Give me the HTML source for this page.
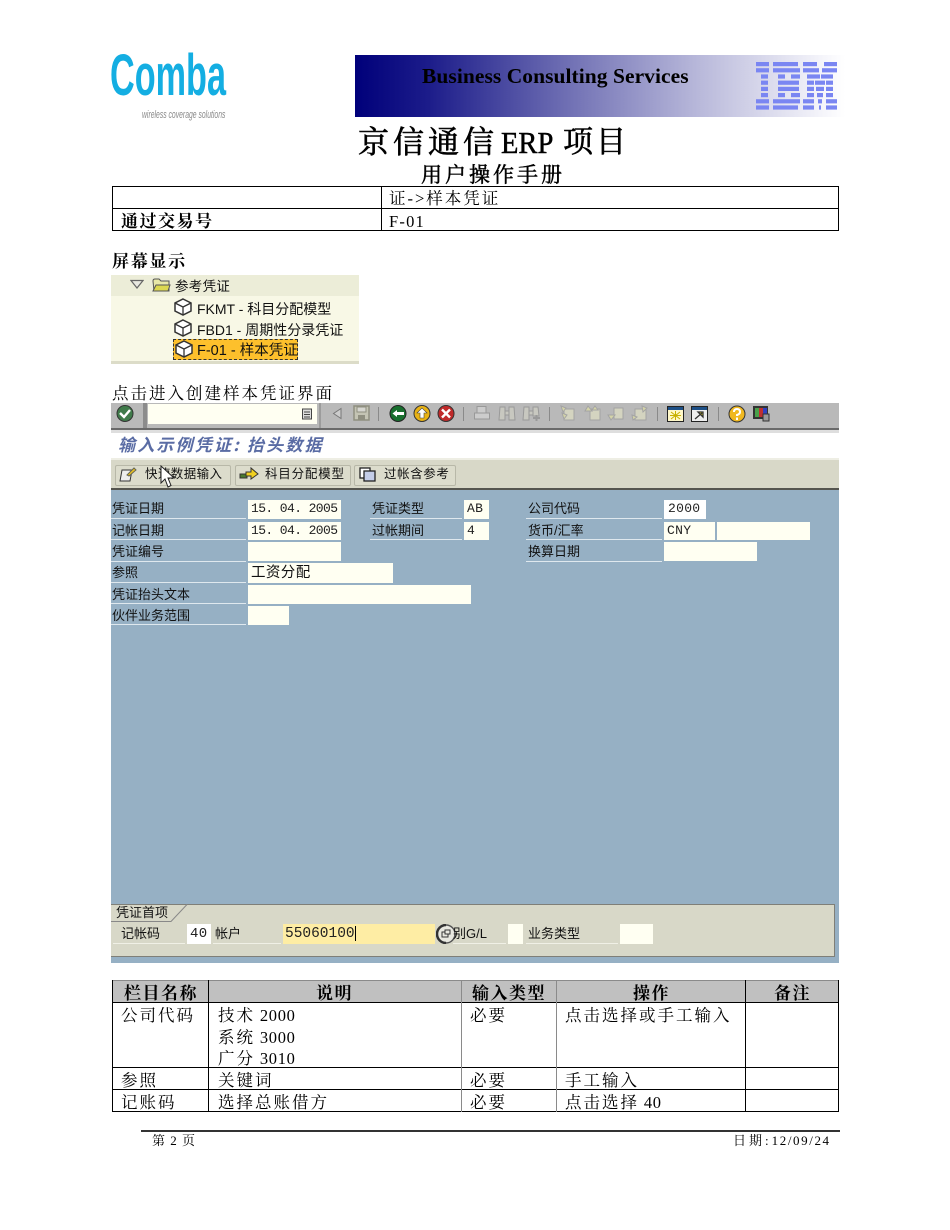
<!DOCTYPE html>
<html><head><meta charset="utf-8"><style>
html,body{margin:0;padding:0;background:#fff}
#p{position:relative;width:950px;height:1230px;overflow:hidden;background:#fff;font-family:"Liberation Serif","Noto Serif CJK SC",serif;color:#000;filter:blur(.3px)}
#p div,#p svg{position:absolute}
.t{white-space:nowrap;line-height:20px;height:20px}
.s{font-size:16.500px;letter-spacing:2px}
.s span{letter-spacing:.7px}
.h{font-size:17px;font-weight:700;letter-spacing:1.500px}
.l{font-family:"Liberation Sans","Noto Sans CJK SC",sans-serif;font-size:13px;color:#111;white-space:nowrap;line-height:16px;height:16px}
.u{background:#dfe8ee;height:1px}
.i{background:#fffff2}
.m{font-family:"Liberation Mono","Noto Sans CJK SC",monospace;font-size:13px;color:#222;white-space:nowrap;line-height:16px;height:16px;letter-spacing:.3px}
.b{background:#000}
.g{background:#8a8a8a}
</style></head><body><div id="p">

<!-- logo -->
<div class="t" style="left:110px;top:48px;height:56px;font:700 58px/56px 'Liberation Sans',sans-serif;color:#14aee2;transform:scaleX(.59);transform-origin:0 0;letter-spacing:0">Comba</div>
<div class="t" style="left:142px;top:105px;font:italic 11px/20px 'Liberation Sans',sans-serif;color:#8a8a8a;transform:scaleX(.62);transform-origin:0 0">wireless coverage solutions</div>

<!-- banner -->
<div style="left:355px;top:55px;width:490px;height:62px;background:linear-gradient(90deg,#00007a 0%,#1c1c8a 15%,#7474b6 45%,#b8b8da 70%,#f4f4fa 95%,#fff 100%)"></div>
<div class="t" style="left:422px;top:66px;font:700 21.500px/20px 'Liberation Serif',serif;color:#000;letter-spacing:.05px">Business Consulting Services</div>
<svg style="left:756px;top:62px" width="81" height="50" viewBox="0 0 81 50">
<g fill="#7a86f2">
<!-- I -->
<rect x="0" y="0" width="13" height="4.200"/><rect x="0" y="6.200" width="13" height="4.200"/>
<rect x="5" y="12.400" width="7" height="4.200"/><rect x="5" y="18.600" width="7" height="4.200"/><rect x="5" y="24.800" width="7" height="4.200"/><rect x="5" y="31" width="7" height="4.200"/>
<rect x="0" y="37.200" width="13" height="4.200"/><rect x="0" y="43.400" width="13" height="4.200"/>
<!-- B -->
<rect x="17" y="0" width="25" height="4.200"/><rect x="17" y="6.200" width="27" height="4.200"/>
<rect x="22" y="12.400" width="7" height="4.200"/><rect x="35" y="12.400" width="9" height="4.200"/>
<rect x="22" y="18.600" width="21" height="4.200"/><rect x="22" y="24.800" width="21" height="4.200"/>
<rect x="22" y="31" width="7" height="4.200"/><rect x="35" y="31" width="9" height="4.200"/>
<rect x="17" y="37.200" width="27" height="4.200"/><rect x="17" y="43.400" width="25" height="4.200"/>
<!-- M -->
<rect x="47" y="0" width="14" height="4.200"/><rect x="68" y="0" width="13" height="4.200"/>
<rect x="47" y="6.200" width="16" height="4.200"/><rect x="66" y="6.200" width="15" height="4.200"/>
<rect x="51" y="12.400" width="13" height="4.200"/><rect x="65" y="12.400" width="12" height="4.200"/>
<rect x="51" y="18.600" width="7" height="4.200"/><rect x="59" y="18.600" width="10" height="4.200"/><rect x="70" y="18.600" width="7" height="4.200"/>
<rect x="51" y="24.800" width="7" height="4.200"/><rect x="60" y="24.800" width="8" height="4.200"/><rect x="70" y="24.800" width="7" height="4.200"/>
<rect x="51" y="31" width="7" height="4.200"/><rect x="61" y="31" width="6" height="4.200"/><rect x="70" y="31" width="7" height="4.200"/>
<rect x="47" y="37.200" width="11" height="4.200"/><rect x="62" y="37.200" width="4" height="4.200"/><rect x="70" y="37.200" width="11" height="4.200"/>
<rect x="47" y="43.400" width="11" height="4.200"/><rect x="63" y="43.400" width="2" height="4.200"/><rect x="70" y="43.400" width="11" height="4.200"/>
</g></svg>

<!-- titles -->
<div class="t" style="left:358px;top:133px;font-size:31px;letter-spacing:4px;-webkit-text-stroke:.6px #000">京信通信</div>
<div class="t" style="left:501px;top:133px;font-size:31px;transform:scaleX(.92);transform-origin:0 0;-webkit-text-stroke:.5px #000">ERP</div>
<div class="t" style="left:563px;top:133px;font-size:30px;letter-spacing:3px;-webkit-text-stroke:.6px #000">项目</div>
<div class="t" style="left:421px;top:165px;font-size:21px;letter-spacing:3px;-webkit-text-stroke:.5px #000">用户操作手册</div>

<!-- table 1 -->
<div class="b" style="left:112px;top:186px;width:727px;height:1px"></div>
<div class="b" style="left:112px;top:208px;width:727px;height:1px"></div>
<div class="b" style="left:112px;top:230px;width:727px;height:1px"></div>
<div class="b" style="left:112px;top:186px;width:1px;height:45px"></div>
<div class="b" style="left:381px;top:186px;width:1px;height:45px"></div>
<div class="b" style="left:838px;top:186px;width:1px;height:45px"></div>
<div class="t s" style="left:389px;top:189px">证-&gt;样本凭证</div>
<div class="t h" style="left:121px;top:212px">通过交易号</div>
<div class="t s" style="left:389px;top:212px;letter-spacing:1.200px">F-01</div>

<div class="t h" style="left:112px;top:252px;letter-spacing:1.700px">屏幕显示</div>

<!-- tree -->
<div style="left:111px;top:275px;width:248px;height:89px;background:#f8f8e6"></div>
<div style="left:111px;top:275px;width:248px;height:21px;background:#ecedd8"></div>
<div style="left:111px;top:361px;width:248px;height:3px;background:#dcdcc8"></div>
<svg style="left:130px;top:279px" width="14" height="11" viewBox="0 0 14 11"><path d="M1 1.5H13L7 9Z" fill="#e8e8e0" stroke="#666" stroke-width="1.2"/></svg>
<svg style="left:152px;top:278px" width="19" height="15" viewBox="0 0 19 15"><path d="M1 3Q1 1 3 1H7L9 3H17V13H2Z" fill="#e8e8a8" stroke="#555"/><path d="M1 13L4 7H18L16 13Z" fill="#dcd850" stroke="#555"/></svg>
<div class="l" style="left:175px;top:279px;font-size:13.500px;letter-spacing:.3px">参考凭证</div>
<svg width="0" height="0"><defs><g id="cube"><path d="M9 1L17 5V13L9 17L1 13V5Z" fill="#fff" stroke="#333" stroke-width="1.5"/><path d="M1 5L9 9L17 5M9 9V17" fill="none" stroke="#333" stroke-width="1.3"/></g></defs></svg>
<svg style="left:174px;top:298px" width="18" height="18"><use href="#cube"/></svg>
<div class="l" style="left:197px;top:301px;font-size:14px">FKMT - 科目分配模型</div>
<svg style="left:174px;top:319px" width="18" height="18"><use href="#cube"/></svg>
<div class="l" style="left:197px;top:322px;font-size:14px">FBD1 - 周期性分录凭证</div>
<div style="left:173px;top:339px;width:125px;height:21px;background:#fdc02c;border:1px dashed #333;box-sizing:border-box"></div>
<svg style="left:175px;top:340px" width="18" height="18"><use href="#cube"/></svg>
<div class="l" style="left:197px;top:343px;font-size:14.500px">F-01 - 样本凭证</div>

<div class="t s" style="left:112px;top:384px;">点击进入创建样本凭证界面</div>

<!-- SAP -->
<div style="left:111px;top:403px;width:728px;height:560px;background:#96b0c4"></div>
<div style="left:111px;top:403px;width:728px;height:25px;background:#b9b9b9"></div>
<div style="left:111px;top:428px;width:728px;height:2px;background:#6a6a6a"></div>
<div style="left:111px;top:430px;width:728px;height:3px;background:#dedede"></div>
<div style="left:111px;top:433px;width:728px;height:26px;background:#fff"></div>
<div style="left:111px;top:458px;width:728px;height:2px;background:#eeeee4"></div>
<div style="left:111px;top:460px;width:728px;height:28px;background:#d8d8c8"></div>
<div style="left:111px;top:488px;width:728px;height:2px;background:#55554f"></div>

<!-- toolbar -->
<svg style="left:116px;top:405px" width="18" height="17" viewBox="0 0 18 17"><circle cx="9" cy="8.5" r="8" fill="#3f7a4a" stroke="#333"/><path d="M4 8L8 12L14 5" fill="none" stroke="#fff" stroke-width="2.4"/></svg>
<div style="left:143px;top:403px;width:4px;height:25px;background:#8c8c8c"></div>
<div style="left:148px;top:404px;width:169px;height:20px;background:#fffff2"></div>
<div style="left:319px;top:403px;width:2px;height:25px;background:#9c9c9c"></div>
<svg style="left:301px;top:407px" width="12" height="13"><rect x="1.5" y="2" width="9" height="10" fill="#ddd" stroke="#444"/><path d="M3 5H9M3 7.5H9M3 10H9" stroke="#444"/></svg>
<svg style="left:331px;top:407px" width="12" height="13"><path d="M10 1.5L2.5 6.5L10 11.5Z" fill="#ccc" stroke="#777"/></svg>
<svg style="left:353px;top:405px" width="17" height="16"><rect x="1" y="1" width="15" height="14" fill="#c4c4b4" stroke="#8f8f80" stroke-width="1.5"/><rect x="4" y="2" width="9" height="5" fill="#d6d6d0" stroke="#8f8f80"/><rect x="5" y="10" width="7" height="5" fill="#8f8f80"/></svg>
<div style="left:378px;top:407px;width:1px;height:14px;background:#8a8a8a"></div>
<svg style="left:389px;top:405px" width="18" height="17" viewBox="0 0 18 17"><circle cx="9" cy="8.5" r="8" fill="#186f2e" stroke="#222"/><path d="M3.500 8.500L8 5V7H15V10H8V12Z" fill="#fff"/></svg>
<svg style="left:413px;top:405px" width="18" height="17" viewBox="0 0 18 17"><circle cx="9" cy="8.5" r="8" fill="#e8b214" stroke="#333"/><path d="M9 3L4 8H7V13H11V8H14Z" fill="#fff" stroke="#444" stroke-width=".6"/></svg>
<svg style="left:437px;top:405px" width="18" height="17" viewBox="0 0 18 17"><circle cx="9" cy="8.5" r="8" fill="#c02a2a" stroke="#333"/><path d="M5 4.500L13 12.500M13 4.500L5 12.500" stroke="#fff" stroke-width="2.400"/></svg>
<div style="left:463px;top:407px;width:1px;height:14px;background:#8a8a8a"></div>
<svg style="left:473px;top:405px" width="18" height="17"><path d="M4 1.500H13V8H4Z" fill="#ccc" stroke="#999"/><rect x="1.500" y="8" width="15" height="6" fill="#ccc" stroke="#999"/></svg>
<svg style="left:497px;top:405px" width="20" height="17"><path d="M3 2H8V15H2ZM12 2H17L18 15H12ZM8 6H12V10H8Z" fill="#c8c8c0" stroke="#999"/></svg>
<svg style="left:521px;top:405px" width="20" height="17"><path d="M3 2H8V15H2ZM12 2H17L18 11H12ZM8 6H12V10H8Z" fill="#c8c8c0" stroke="#999"/><path d="M12 13H19M15.500 10V16" stroke="#999" stroke-width="2"/></svg>
<div style="left:549px;top:407px;width:1px;height:14px;background:#8a8a8a"></div>
<svg style="left:559px;top:405px" width="18" height="17"><path d="M5 4H15V15H5Z" fill="#d4d4c0" stroke="#a4a4a4"/><path d="M2 1L7 3L4 7ZM3 8L8 10L5 14Z" fill="#d4d4a8" stroke="#a4a4a4"/></svg>
<svg style="left:584px;top:405px" width="18" height="17"><path d="M6 4H16V15H6Z" fill="#d4d4c0" stroke="#a4a4a4"/><path d="M4 1L8 6H1ZM11 1L14 5H8Z" fill="#d4d4a8" stroke="#a4a4a4"/></svg>
<svg style="left:607px;top:405px" width="18" height="17"><path d="M7 3H16V14H7Z" fill="#d4d4c0" stroke="#a4a4a4"/><path d="M4 15L8 10H1Z" fill="#d4d4a8" stroke="#a4a4a4"/></svg>
<svg style="left:630px;top:405px" width="18" height="17"><path d="M5 4H16V15H5Z" fill="#d4d4c0" stroke="#a4a4a4"/><path d="M12 1L17 3L13 7ZM2 10L7 12L3 15Z" fill="#d4d4a8" stroke="#a4a4a4"/></svg>
<div style="left:657px;top:407px;width:1px;height:14px;background:#8a8a8a"></div>
<svg style="left:667px;top:406px" width="17" height="16"><rect x=".5" y=".5" width="16" height="15" fill="#fff8c8" stroke="#222"/><rect x="1" y="1" width="15" height="3" fill="#1d4f86"/><path d="M8.500 5V14M4 6L13 13M13 6L4 13M3 9.500H14" stroke="#c8b000"/></svg>
<svg style="left:691px;top:406px" width="17" height="16"><rect x=".5" y=".5" width="16" height="15" fill="#eee" stroke="#222"/><rect x="1" y="1" width="15" height="3" fill="#1d4f86"/><path d="M4 13L11 7M7 6H12V11Z" stroke="#333" fill="#f0e020" stroke-width="1.300"/></svg>
<div style="left:718px;top:407px;width:1px;height:14px;background:#8a8a8a"></div>
<svg style="left:728px;top:405px" width="18" height="18" viewBox="0 0 18 18"><circle cx="9" cy="9" r="8" fill="#f0b820" stroke="#333"/><path d="M6 7Q6 4 9 4Q12 4 12 7Q12 9 9 10V11" fill="none" stroke="#fff" stroke-width="2"/><rect x="8" y="12.500" width="2" height="2.500" fill="#fff"/></svg>
<svg style="left:752px;top:405px" width="18" height="18"><rect x="1" y="1" width="15" height="13" fill="#333"/><rect x="3" y="3" width="4" height="9" fill="#4aa04a"/><rect x="7" y="3" width="4" height="9" fill="#c03030"/><rect x="11" y="3" width="4" height="9" fill="#3040c0"/><rect x="11" y="9" width="6" height="7" fill="#999" stroke="#333"/></svg>

<!-- screen title -->
<div class="t" style="left:118px;top:434px;font:italic 700 17px/20px 'Noto Sans CJK SC',sans-serif;color:#5a6ca4;letter-spacing:2.200px">输入示例凭证: 抬头数据</div>

<!-- buttons -->
<div style="left:115px;top:465px;width:114px;height:19px;border:1px solid #b8b8a8;background:#dcdccc;border-radius:2px"></div>
<div style="left:235px;top:465px;width:114px;height:19px;border:1px solid #b8b8a8;background:#dcdccc;border-radius:2px"></div>
<div style="left:354px;top:465px;width:100px;height:19px;border:1px solid #b8b8a8;background:#dcdccc;border-radius:2px"></div>
<svg style="left:119px;top:466px" width="18" height="17"><path d="M3 4H13L11 15H1Z" fill="#eee" stroke="#333"/><path d="M8 9L15 2L17 4L10 10Z" fill="#e8c020" stroke="#665"/></svg>
<div class="l" style="left:145px;top:466px;font-size:12.500px;letter-spacing:.4px">快速数据输入</div>
<svg style="left:239px;top:466px" width="20" height="17"><path d="M1 8H8V12H1Z" fill="#487a30" stroke="#333"/><path d="M7 6H12V2L19 8L12 13V10H7Z" fill="#f0d020" stroke="#333"/></svg>
<div class="l" style="left:265px;top:466px;font-size:12.500px;letter-spacing:.8px">科目分配模型</div>
<svg style="left:359px;top:467px" width="17" height="15"><rect x="1" y="1" width="10" height="10" fill="#fff" stroke="#222" stroke-width="1.300"/><rect x="5" y="4" width="11" height="10" fill="#c4cde8" stroke="#222" stroke-width="1.300"/></svg>
<div class="l" style="left:384px;top:466px;font-size:12.500px;letter-spacing:.6px">过帐含参考</div>
<svg style="left:160px;top:465px" width="16" height="24" viewBox="0 0 16 24"><path d="M1 1V18L5 14L8 22L11 20.500L8 13H14Z" fill="#fff" stroke="#222"/></svg>

<!-- form labels -->
<div class="l" style="left:112px;top:501px">凭证日期</div><div class="u" style="left:111px;top:518px;width:135px"></div>
<div class="l" style="left:112px;top:523px">记帐日期</div><div class="u" style="left:111px;top:539px;width:135px"></div>
<div class="l" style="left:112px;top:544px">凭证编号</div><div class="u" style="left:111px;top:561px;width:135px"></div>
<div class="l" style="left:112px;top:565px">参照</div><div class="u" style="left:111px;top:582px;width:135px"></div>
<div class="l" style="left:112px;top:587px">凭证抬头文本</div><div class="u" style="left:111px;top:603px;width:135px"></div>
<div class="l" style="left:112px;top:608px">伙伴业务范围</div><div class="u" style="left:111px;top:624px;width:135px"></div>

<div class="i" style="left:248px;top:500px;width:93px;height:19px"></div>
<div class="i" style="left:248px;top:522px;width:93px;height:18px"></div>
<div class="i" style="left:248px;top:542px;width:93px;height:19px"></div>
<div class="i" style="left:248px;top:563px;width:145px;height:20px"></div>
<div class="i" style="left:248px;top:585px;width:223px;height:19px"></div>
<div class="i" style="left:248px;top:606px;width:41px;height:19px"></div>
<div class="m" style="left:251px;top:501px;letter-spacing:-.6px">15. 04. 2005</div>
<div class="m" style="left:251px;top:523px;letter-spacing:-.6px">15. 04. 2005</div>
<div class="l" style="left:251px;top:565px;font-size:14.500px;letter-spacing:.4px">工资分配</div>

<div class="l" style="left:372px;top:501px">凭证类型</div><div class="u" style="left:370px;top:518px;width:92px"></div>
<div class="l" style="left:372px;top:523px">过帐期间</div><div class="u" style="left:370px;top:539px;width:92px"></div>
<div class="i" style="left:464px;top:500px;width:25px;height:19px"></div>
<div class="i" style="left:464px;top:522px;width:25px;height:18px"></div>
<div class="m" style="left:467px;top:501px">AB</div>
<div class="m" style="left:467px;top:523px">4</div>

<div class="l" style="left:528px;top:501px">公司代码</div><div class="u" style="left:526px;top:518px;width:136px"></div>
<div class="l" style="left:528px;top:523px">货币/汇率</div><div class="u" style="left:526px;top:539px;width:136px"></div>
<div class="l" style="left:528px;top:544px">换算日期</div><div class="u" style="left:526px;top:561px;width:136px"></div>
<div class="i" style="left:664px;top:500px;width:42px;height:19px;background:#fff"></div>
<div class="i" style="left:664px;top:522px;width:51px;height:18px"></div>
<div class="i" style="left:717px;top:522px;width:93px;height:18px"></div>
<div class="i" style="left:664px;top:542px;width:93px;height:19px"></div>
<div class="m" style="left:668px;top:501px">2000</div>
<div class="m" style="left:667px;top:523px">CNY</div>

<!-- lower panel -->
<div style="left:111px;top:904px;width:724px;height:53px;background:#d8d8c8;border:1px solid #7f7f78;border-left:0;box-sizing:border-box"></div>
<svg style="left:111px;top:904px" width="78" height="18"><path d="M0 17.500H60L76 .5" fill="none" stroke="#888"/></svg>
<div class="l" style="left:116px;top:905px">凭证首项</div>
<div class="l" style="left:121px;top:926px">记帐码</div><div class="u" style="left:113px;top:943px;width:72px;background:#f0f0e6"></div>
<div style="left:187px;top:924px;width:24px;height:20px;background:#fff"></div>
<div class="m" style="left:190px;top:926px;font-size:14px">40</div>
<div class="l" style="left:215px;top:926px">帐户</div><div class="u" style="left:213px;top:943px;width:68px;background:#f0f0e6"></div>
<div style="left:283px;top:924px;width:152px;height:20px;background:#feeda4"></div>
<div class="m" style="left:285px;top:926px;font-size:14.500px;letter-spacing:0">55060100</div>
<div style="left:355px;top:926px;width:1px;height:15px;background:#000"></div>
<svg style="left:436px;top:924px" width="20" height="20"><circle cx="10" cy="10" r="9" fill="#e8e8e0" stroke="#555" stroke-width="1.500"/><path d="M10 1A9 9 0 0 0 10 19" fill="none" stroke="#333" stroke-width="2.500"/><rect x="6" y="8" width="6" height="5" fill="none" stroke="#333"/><rect x="9" y="6" width="5" height="4" fill="#e8e8e0" stroke="#333"/></svg>
<div class="l" style="left:453px;top:926px">别G/L</div><div class="u" style="left:453px;top:943px;width:53px;background:#f0f0e6"></div>
<div class="i" style="left:508px;top:924px;width:15px;height:20px"></div>
<div class="l" style="left:528px;top:926px">业务类型</div><div class="u" style="left:526px;top:943px;width:92px;background:#f0f0e6"></div>
<div class="i" style="left:620px;top:924px;width:33px;height:20px"></div>

<!-- table 2 -->
<div style="left:112px;top:980px;width:727px;height:23px;background:#c0c0c0"></div>
<div class="g" style="left:112px;top:980px;width:727px;height:1px"></div>
<div class="b" style="left:112px;top:1002px;width:727px;height:1px"></div>
<div class="b" style="left:112px;top:1067px;width:727px;height:1px"></div>
<div class="b" style="left:112px;top:1089px;width:727px;height:1px"></div>
<div class="b" style="left:112px;top:1111px;width:727px;height:1px"></div>
<div class="b" style="left:112px;top:980px;width:1px;height:132px"></div>
<div class="b" style="left:208px;top:980px;width:1px;height:132px"></div>
<div class="g" style="left:461px;top:980px;width:1px;height:132px"></div>
<div class="g" style="left:556px;top:980px;width:1px;height:132px"></div>
<div class="b" style="left:745px;top:980px;width:1px;height:132px"></div>
<div class="b" style="left:838px;top:980px;width:1px;height:132px"></div>

<div class="t h" style="left:124px;top:984px">栏目名称</div>
<div class="t h" style="left:316px;top:984px">说明</div>
<div class="t h" style="left:472px;top:984px">输入类型</div>
<div class="t h" style="left:633px;top:984px">操作</div>
<div class="t h" style="left:774px;top:984px">备注</div>

<div class="t s" style="left:121px;top:1006px">公司代码</div>
<div class="t s" style="left:218px;top:1006px">技术<span> 2000</span></div>
<div class="t s" style="left:218px;top:1028px">系统<span> 3000</span></div>
<div class="t s" style="left:218px;top:1049px">广分<span> 3010</span></div>
<div class="t s" style="left:470px;top:1006px">必要</div>
<div class="t s" style="left:565px;top:1006px">点击选择或手工输入</div>
<div class="t s" style="left:121px;top:1071px">参照</div>
<div class="t s" style="left:218px;top:1071px">关键词</div>
<div class="t s" style="left:470px;top:1071px">必要</div>
<div class="t s" style="left:565px;top:1071px">手工输入</div>
<div class="t s" style="left:121px;top:1093px">记账码</div>
<div class="t s" style="left:218px;top:1093px">选择总账借方</div>
<div class="t s" style="left:470px;top:1093px">必要</div>
<div class="t s" style="left:565px;top:1093px">点击选择<span> 40</span></div>

<!-- footer -->
<div style="left:141px;top:1130px;width:699px;height:1.500px;background:#333"></div>
<div class="t" style="left:152px;top:1131px;font-size:13px;letter-spacing:1px">第 2 页</div>
<div class="t" style="left:733px;top:1131px;font-size:13px;letter-spacing:3px">日期:<span style="letter-spacing:1.600px">12/09/24</span></div>

</div></body></html>
